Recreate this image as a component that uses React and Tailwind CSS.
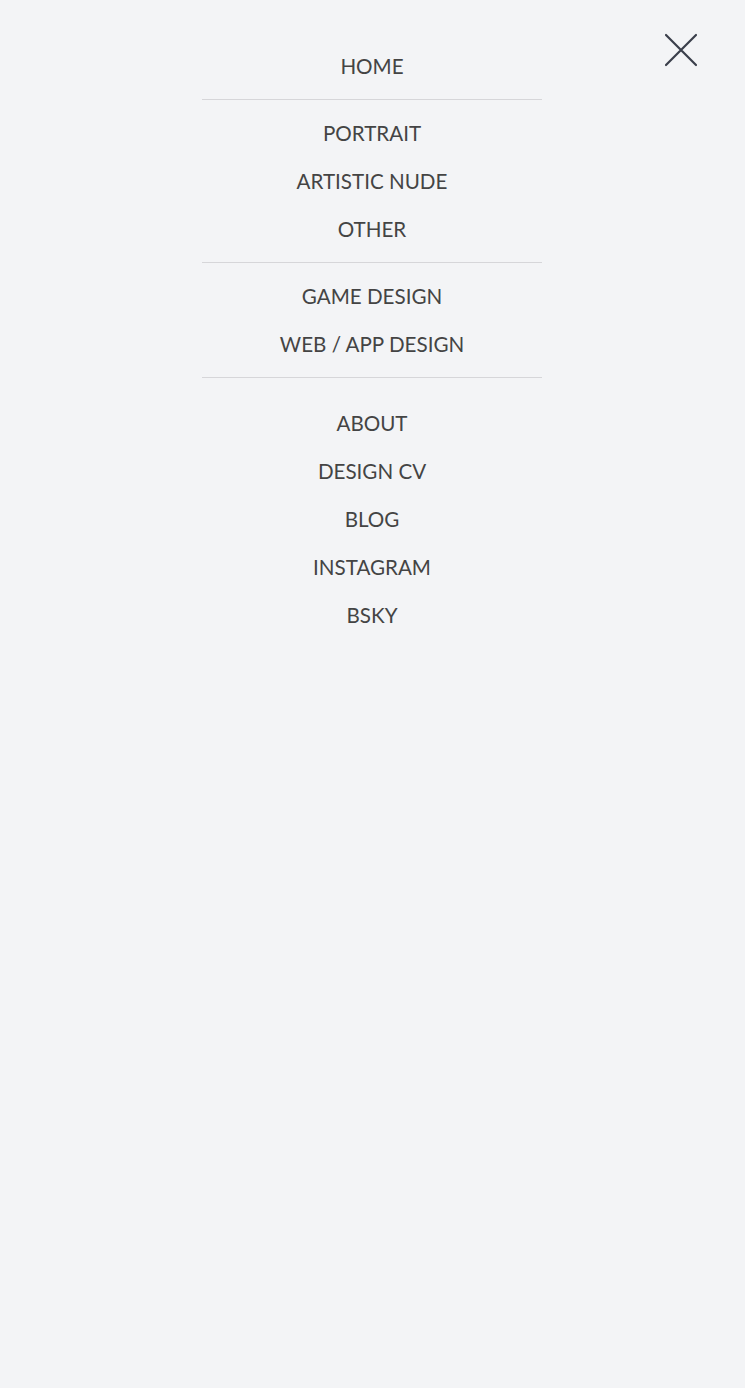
import React from 'react';

const groups = [
    ['HOME'],
    ['PORTRAIT', 'ARTISTIC NUDE', 'OTHER'],
    ['GAME DESIGN', 'WEB / APP DESIGN'],
    ['ABOUT', 'DESIGN CV', 'BLOG', 'INSTAGRAM', 'BSKY'],
];

const App = () => {
    return (
        <div className="relative min-h-[1388px] w-full bg-[#f3f4f6] text-[#444444]" style={{ fontFamily: 'Lato, "Open Sans", sans-serif' }}>
            {/* close button */}
            <button className="absolute left-[664px] top-[33px] w-[34px] h-[34px] flex items-center justify-center">
                <svg width="34" height="34" viewBox="0 0 34 34" fill="none">
                    <path d="M2 2 L32 32 M32 2 L2 32" stroke="#3a3f4b" strokeWidth="2.2" strokeLinecap="round" />
                </svg>
            </button>

            <nav className="pt-[42px] pr-px flex flex-col items-center">
                {groups.map((items, i) => (
                    <React.Fragment key={i}>
                        {i > 0 && <div className="w-[340px] h-px bg-[#d6d6d9] my-[9px]"></div>}
                        <ul className={`flex flex-col items-center ${i === 3 ? 'mt-[12px]' : ''}`}>
                            {items.map((item) => (
                                <li key={item} className="text-[20.6px] leading-[48px] text-center">
                                    {item}
                                </li>
                            ))}
                        </ul>
                    </React.Fragment>
                ))}
            </nav>
        </div>
    );
};

export default App;
